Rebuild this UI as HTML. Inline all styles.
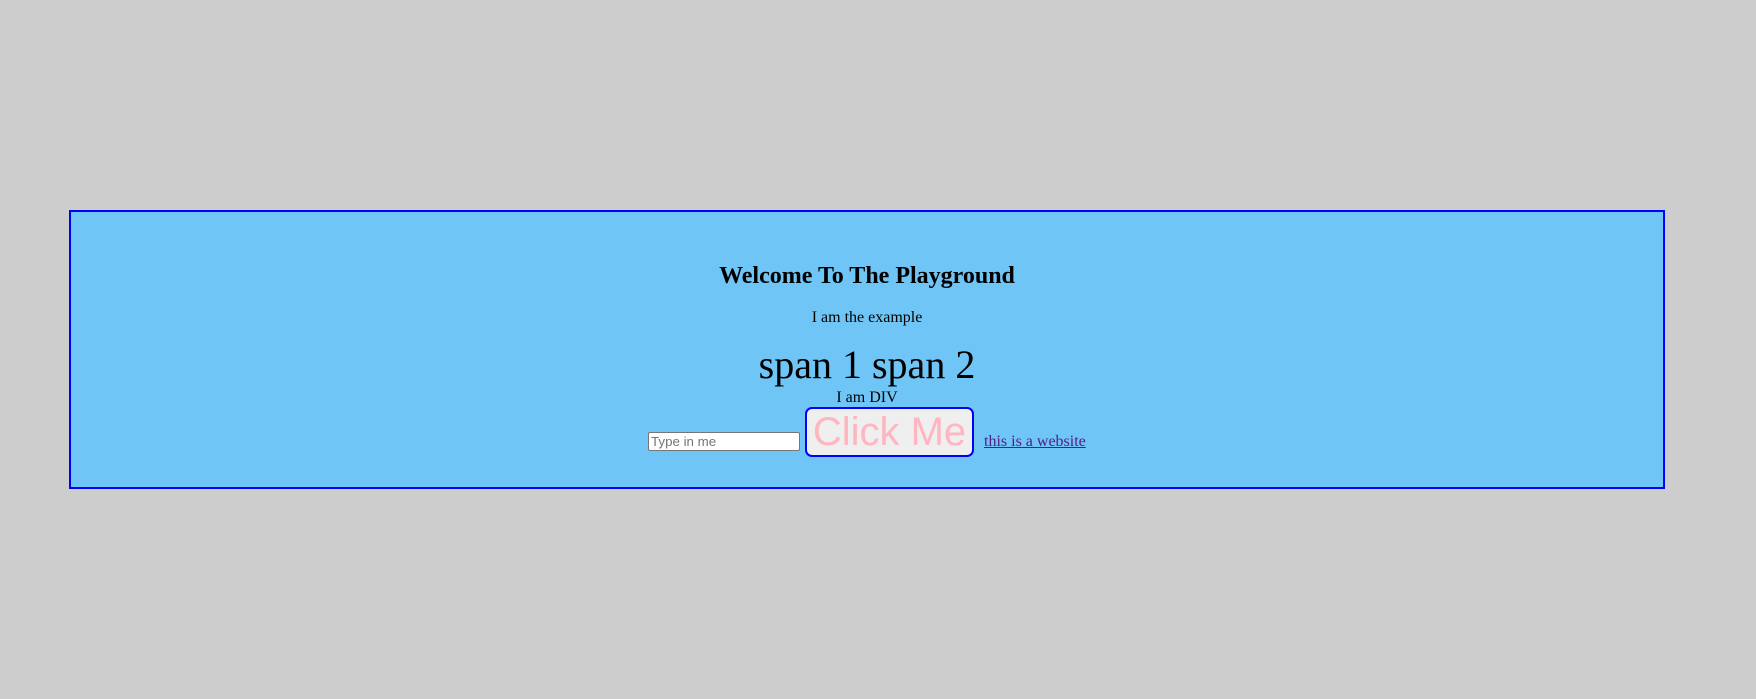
<!DOCTYPE html>
<html><head><style>
html,body{margin:0;padding:0;background:#cdcdcd;width:1756px;height:699px;overflow:hidden;position:relative;font-family:"Liberation Serif",serif;}
.box{position:absolute;left:69px;top:210px;width:1592px;height:275px;border:2px solid #0000ff;background:#6fc5f5;}
.t{position:absolute;left:69px;width:1596px;text-align:center;white-space:nowrap;color:#000;}
.in{position:absolute;left:648px;top:432px;height:17px;border:1px solid #767676;background:#fff;font:13.33px "Liberation Sans",sans-serif;color:#757575;box-sizing:content-box;line-height:17px;padding:0 0 0 2px;width:148px;border-radius:2px;}
.btn{position:absolute;left:805px;top:407px;width:165px;height:46px;border:2px solid #0000ff;border-radius:7px;background:#efefef;font:40px "Liberation Sans",sans-serif;color:#ffb6c1;text-align:center;line-height:46px;}
.a{position:absolute;left:984px;top:434px;font-size:16px;line-height:16px;color:#551a8b;text-decoration:underline;white-space:nowrap;}
</style></head><body>
<div class="box"></div>
<div class="t" style="top:264px;font-size:24px;line-height:24px;font-weight:bold;">Welcome To The Playground</div>
<div class="t" style="top:310px;font-size:16px;line-height:16px;">I am the example</div>
<div class="t" style="top:345px;font-size:40px;line-height:40px;">span 1 span 2</div>
<div class="t" style="top:390px;font-size:16px;line-height:16px;">I am DIV</div>
<div class="in">Type in me</div>
<div class="btn">Click Me</div>
<div class="a">this is a website</div>
</body></html>
